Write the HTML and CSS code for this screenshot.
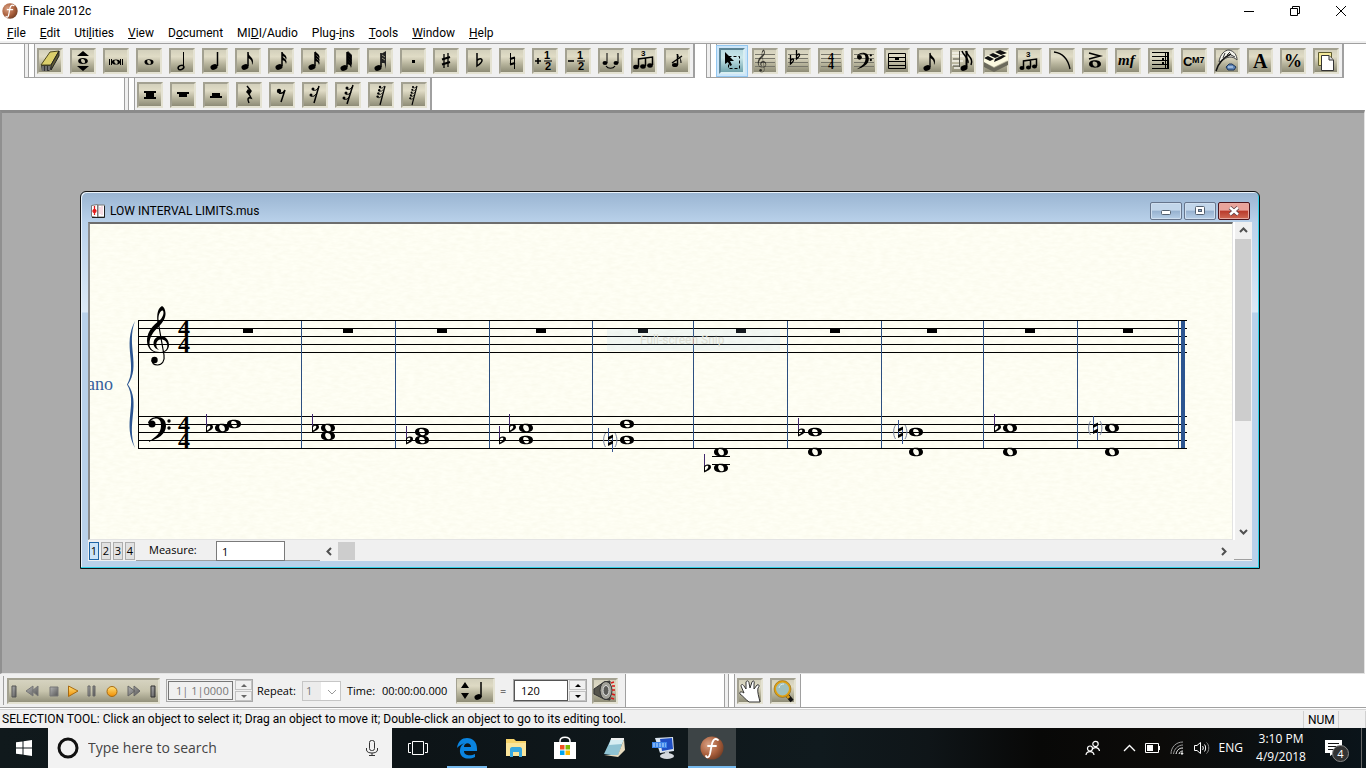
FILE: index.html
```html
<!DOCTYPE html>
<html lang="en">
<head>
    <meta charset="UTF-8">
    <meta name="viewport" content="width=device-width, initial-scale=1.0">
    <title>Finale 2012c</title>
    <link rel="stylesheet" href="styles.css">
</head>
<body>
    <!-- Shared music symbols -->
    <svg class="defs" aria-hidden="true">
        <defs>
            <radialGradient id="copper" cx="35%" cy="35%" r="75%">
                <stop offset="0" stop-color="#d9a184"/>
                <stop offset=".6" stop-color="#a95f3c"/>
                <stop offset="1" stop-color="#6d3a22"/>
            </radialGradient>
            <linearGradient id="gold" x1="0" y1="0" x2="0" y2="1">
                <stop offset="0" stop-color="#ffe27a"/>
                <stop offset="1" stop-color="#f08c00"/>
            </linearGradient>
            <linearGradient id="steel" x1="0" y1="0" x2="1" y2="1">
                <stop offset="0" stop-color="#b5b5b5"/>
                <stop offset="1" stop-color="#555"/>
            </linearGradient>
            <filter id="paper" x="0" y="0" width="100%" height="100%">
                <feTurbulence type="fractalNoise" baseFrequency="0.12 0.35" numOctaves="3" seed="3"/>
                <feColorMatrix values="0 0 0 0 .72  0 0 0 0 .7  0 0 0 0 .5  .22 0 0 0 -.06"/>
            </filter>
            <g id="whole"><path fill-rule="evenodd" d="M-7 0C-7-3-4-4.300 0-4.300S7-3 7 0 4 4.300 0 4.300-7 3-7 0ZM-2.800-1.500C-3.200 1 -1 3.400 1 3.300 3 3.200 3.200 1 2.600-.8 1.800-3-2.400-4-2.800-1.500Z"/></g>
            <g id="flat">
                <path d="M0-14H1V4H0Z" fill="#43296e"/>
                <path fill-rule="evenodd" d="M0-1.500C2-4 7-4.200 7-1 7 1.800 3 3 0 4.500ZM1 2.500C3 1.500 4.300 0 4.300-1.300 4.300-3 2-2.500 1-1Z"/>
            </g>
            <g id="natural">
                <path d="M5.500-12V5M9.500-5V12" stroke="#3a568f" fill="none"/>
                <path d="M5-3 10-5.500V-2.500L5 0ZM5 3 10 .5V3.500L5 6Z"/>
                <path d="M2.500-7C0-3 0 3 2.500 7M12-7C14.500-3 14.500 3 12 7" stroke="#77829c" fill="none"/>
            </g>
            <g id="head"><ellipse rx="3.600" ry="2.700" transform="rotate(-20)"/></g>
            <g id="flag"><path d="M0 0C0 4 5 5 5 9 5 11 4.500 12 4 13 4.300 9 3 7 0 6Z"/></g>
            <g id="shortflag"><path d="M0 0C1 2 4 2.500 4.600 6L4 8C3.500 5 2 4.500 0 4Z"/></g>
            <g id="hook"><circle r="1.500"/><path d="M0 1C2 2 4 1 5-1" stroke="#000" fill="none"/></g>
            <g id="staff"><path d="M3 6.500H23M3 10.500H23M3 14.500H23M3 18.500H23" stroke="#77766a" fill="none"/></g>
            <symbol id="clef-g" viewBox="146 305 24 62">
                <path fill-rule="evenodd" d="M162 306C158 308 156.500 314 157.500 322 150 328 147 334 147 341 147 348 152 353 159 353 165 353 169 350 169 345 169 340 165.500 336 161 336 156 336 153.500 340 153.500 343.500 153.500 347 156 349 159 350 156.500 348 156.300 346 156.300 344.500 156.300 341.500 158 339.500 161 339.500 165 339.500 167.300 342 167.300 346 167.300 350 164 352 159.500 352 153 352 149.500 348.500 149.500 344 149.500 337 153 332 159 326.500 163 322 165.800 318 165.500 313 165.200 309.500 164 307 162 306ZM162.500 310.500C164 311 164 315 161 319 159.700 320.500 159 320.500 158.600 320.500 158 315 160 311 162.500 310.500Z"/>
                <path d="M158 321 164 355C165 361 162 365 157.500 365 154 365 152 363 152 360" fill="none" stroke="#000" stroke-width="1.200"/>
                <circle cx="154.500" cy="360" r="3.200"/>
            </symbol>
            <symbol id="clef-f" viewBox="147 416 25 27">
                <path d="M148 423C149 419 153 417 157 417 162.500 417 166 420 166 426 166 434 158 439 148 442 156 437 161 433 161 425.500 161 420.500 159 418.500 156 418.500 153 418.500 150.500 420 149.500 423Z"/>
                <circle cx="152" cy="424" r="3.500"/><circle cx="169" cy="421" r="1.700"/><circle cx="169" cy="428" r="1.700"/>
            </symbol>
            <symbol id="finale" viewBox="0 0 24 24">
                <circle cx="12" cy="12" r="11.500" fill="url(#copper)"/>
                <path d="M18 4C14 1 12 6 11.500 10L10 18C9 22 7 22 6 20M8 10H16" fill="none" stroke="#fff" stroke-width="1.800" stroke-linecap="round"/>
            </symbol>
        </defs>
    </svg>

    <header class="titlebar">
        <svg class="app-icon" viewBox="0 0 24 24"><use href="#finale"/></svg>
        <span class="app-title">Finale 2012c</span>
        <div class="window-buttons">
            <button aria-label="Minimize"><svg width="12" height="12"><path d="M1 6.500H11" stroke="#000"/></svg></button>
            <button aria-label="Restore"><svg width="12" height="12" fill="none" stroke="#000"><path d="M1.500 3.500H8.500V10.500H1.500ZM3.500 3V1.500H10.500V8.500H9"/></svg></button>
            <button aria-label="Close"><svg width="12" height="12"><path d="M1 1 11 11M11 1 1 11" stroke="#000"/></svg></button>
        </div>
    </header>

    <nav class="menubar">
        <a href="#"><u>F</u>ile</a>
        <a href="#"><u>E</u>dit</a>
        <a href="#">Uti<u>l</u>ities</a>
        <a href="#"><u>V</u>iew</a>
        <a href="#">D<u>o</u>cument</a>
        <a href="#">MI<u>D</u>I/Audio</a>
        <a href="#">Plug-<u>i</u>ns</a>
        <a href="#"><u>T</u>ools</a>
        <a href="#"><u>W</u>indow</a>
        <a href="#"><u>H</u>elp</a>
    </nav>

    <div class="dock">
        <div class="dock-row">
            <!-- Simple entry palette -->
            <div class="toolbar">
                <button class="tool" aria-label="Eraser"><svg viewBox="0 0 26 26"><path d="M4 17H13L14 21 12 23H5Z" fill="#333"/><path d="M6 18V23M9 18V23M12 18V22" stroke="#aaa"/><path d="M13 4 22 3 14 17H4Z" fill="#dccf6c" stroke="#4d481f"/><path d="M22 3V8L14 22V17Z" fill="#5f5b33" stroke="#222"/></svg></button>
                <button class="tool" aria-label="Repitch"><svg viewBox="0 0 26 26"><path d="M13 3 19 8H7ZM13 23 19 18H7Z"/><use href="#whole" transform="translate(13 13) scale(.7)"/></svg></button>
                <button class="tool" aria-label="Double whole note"><svg viewBox="0 0 26 26"><use href="#whole" transform="translate(13 14) scale(.6)"/><path d="M6.500 11V17M8.500 11V17M17.500 11V17M19.500 11V17" stroke="#000"/></svg></button>
                <button class="tool" aria-label="Whole note"><svg viewBox="0 0 26 26"><use href="#whole" transform="translate(13 14) scale(.65)"/></svg></button>
                <button class="tool" aria-label="Half note"><svg viewBox="0 0 26 26"><ellipse cx="12" cy="19.500" rx="3" ry="2" fill="none" stroke="#000" stroke-width="1.500" transform="rotate(-25 12 19.500)"/><path d="M14.500 4V19" stroke="#000"/></svg></button>
                <button class="tool" aria-label="Quarter note"><svg viewBox="0 0 26 26"><use href="#head" x="12" y="19"/><path d="M15.500 4V18" stroke="#000" stroke-width="1.500"/></svg></button>
                <button class="tool" aria-label="Eighth note"><svg viewBox="0 0 26 26"><use href="#head" x="10" y="19"/><path d="M13 4V18" stroke="#000" stroke-width="1.500"/><use href="#flag" x="13" y="4"/></svg></button>
                <button class="tool" aria-label="Sixteenth note"><svg viewBox="0 0 26 26"><use href="#head" x="11" y="19"/><path d="M14 4V18" stroke="#000" stroke-width="1.500"/><use href="#shortflag" x="14" y="4"/><use href="#shortflag" x="14" y="8"/></svg></button>
                <button class="tool" aria-label="32nd note"><svg viewBox="0 0 26 26"><use href="#head" x="11" y="19"/><path d="M14 4V18" stroke="#000" stroke-width="1.500"/><use href="#shortflag" x="14" y="3"/><use href="#shortflag" x="14" y="6"/><use href="#shortflag" x="14" y="9"/></svg></button>
                <button class="tool" aria-label="64th note"><svg viewBox="0 0 26 26"><use href="#head" x="10" y="20"/><path d="M13 4V19" stroke="#000" stroke-width="1.500"/><path d="M14 3 18 7V17L13 14Z" fill="#222"/><use href="#shortflag" x="13" y="3"/><use href="#shortflag" x="13" y="6"/><use href="#shortflag" x="13" y="9"/><use href="#shortflag" x="13" y="12"/></svg></button>
                <button class="tool" aria-label="128th note"><svg viewBox="0 0 26 26"><use href="#head" x="11" y="20"/><path d="M14 5V19" stroke="#000" stroke-width="1.500"/><path d="M14 6 19 3V21L17.500 15 14 15Z" fill="#222"/><path d="M15 7 18 9M15 10 18 12" stroke="#99967f"/></svg></button>
                <button class="tool" aria-label="Augmentation dot"><svg viewBox="0 0 26 26"><rect x="12" y="12" width="3" height="3"/></svg></button>
                <button class="tool" aria-label="Sharp"><svg viewBox="0 0 26 26"><path d="M11 6V20M15 5V19" stroke="#000" stroke-width="1.300"/><path d="M9 11.500 17 9M9 16.500 17 14" stroke="#000" stroke-width="2.200"/></svg></button>
                <button class="tool" aria-label="Flat"><svg viewBox="0 0 26 26"><path d="M11 5V18C14 16 16 14 16 12.500 16 10 13 10 11 12.500" fill="none" stroke="#000" stroke-width="1.500"/></svg></button>
                <button class="tool" aria-label="Natural"><svg viewBox="0 0 26 26"><path d="M11.500 5V17M15.500 9V21" stroke="#000"/><path d="M11 11 16 9.500M11 16.500 16 15" stroke="#000" stroke-width="2.200"/></svg></button>
                <button class="tool" aria-label="Half step up"><svg viewBox="0 0 26 26"><path d="M3 13H9M6 10V16" stroke="#000" stroke-width="1.600"/><text x="12" y="11" class="fraction">1</text><path d="M12 13H20" stroke="#000"/><text x="13" y="22" class="fraction">2</text></svg></button>
                <button class="tool" aria-label="Half step down"><svg viewBox="0 0 26 26"><path d="M3 13H9" stroke="#000" stroke-width="1.600"/><text x="12" y="11" class="fraction">1</text><path d="M12 13H20" stroke="#000"/><text x="13" y="22" class="fraction">2</text></svg></button>
                <button class="tool" aria-label="Tie"><svg viewBox="0 0 26 26"><ellipse cx="7" cy="15" rx="2.500" ry="2"/><ellipse cx="18" cy="15" rx="2.500" ry="2"/><path d="M9 5V15M20 5V15" stroke="#000"/><path d="M8 18C10 21 15 21 17 18" fill="none" stroke="#000" stroke-width="1.200"/></svg></button>
                <button class="tool" aria-label="Tuplet"><svg viewBox="0 0 26 26"><text x="10" y="8" class="tiny">3</text><path d="M7.500 19V11L21.500 9V17M14.500 18V10" fill="none" stroke="#000" stroke-width="1.500"/><ellipse cx="5" cy="19" rx="2.800" ry="2.200"/><ellipse cx="12" cy="18.500" rx="2.800" ry="2.200"/><ellipse cx="19" cy="17.500" rx="2.800" ry="2.200"/></svg></button>
                <button class="tool" aria-label="Grace note"><svg viewBox="0 0 26 26"><ellipse cx="11" cy="17" rx="3" ry="2"/><path d="M13.500 6V17M8 15 18 8" stroke="#000" stroke-width="1.500"/><path d="M13 6C14 9 17 9 17 15" fill="none" stroke="#000"/></svg></button>
            </div>

            <!-- Main tool palette -->
            <div class="toolbar">
                <button class="tool selected" aria-label="Selection tool"><svg viewBox="0 0 26 26"><rect x="9.500" y="8.500" width="11" height="12" fill="none" stroke="#000" stroke-dasharray="3 2"/><path d="M6 4V16L9 14 11 18 13 17 11 13H15Z"/></svg></button>
                <button class="tool" aria-label="Staff tool"><svg viewBox="0 0 26 26"><use href="#staff"/><use href="#clef-g" x="4" y="1" width="12" height="24" opacity=".7"/></svg></button>
                <button class="tool" aria-label="Key signature tool"><svg viewBox="0 0 26 26"><use href="#staff"/><path d="M5.500 7V16C8 14 9 13 8.500 11.500 8 10.500 7 11 5.500 12.500M11.500 2V11C14 9 15 8 14.500 6.500 14 5.500 13 6 11.500 7.500" fill="none" stroke="#000" stroke-width="1.300"/></svg></button>
                <button class="tool" aria-label="Time signature tool"><svg viewBox="0 0 26 26"><use href="#staff"/><text x="10" y="13" class="meter">4</text><text x="10" y="21" class="meter">4</text></svg></button>
                <button class="tool" aria-label="Clef tool"><svg viewBox="0 0 26 26"><use href="#staff"/><use href="#clef-f" x="5" y="4" width="17" height="18"/></svg></button>
                <button class="tool" aria-label="Measure tool"><svg viewBox="0 0 26 26"><path d="M4.500 5.500H21.500V20.500H4.500ZM4 9.500H22M4 13.500H22M4 17.500H22" fill="none" stroke="#000"/><path d="M11 10H15V12H11Z"/></svg></button>
                <button class="tool" aria-label="Simple entry tool"><svg viewBox="0 0 26 26"><use href="#head" x="10" y="20"/><path d="M13 5V19" stroke="#000" stroke-width="1.300"/><use href="#flag" x="13" y="4"/></svg></button>
                <button class="tool" aria-label="Speedy entry tool"><svg viewBox="0 0 26 26"><path d="M2 5H14M2 8H14M2 13H13M2 17H10M4 20H12" stroke="#f5f4ea" stroke-width="1.500"/><path d="M9.500 3V19M3 18H10M3 11H10" stroke="#55544a"/><use href="#head" x="14" y="20"/><path d="M16.500 3V19" stroke="#000" stroke-width="2"/><path d="M12 3C13 7 19 10 18 15M16 3C17 8 24 10 21 17" fill="none" stroke="#000" stroke-width="1.500"/></svg></button>
                <button class="tool" aria-label="HyperScribe tool"><svg viewBox="0 0 26 26"><path d="M1 14 11 20V24L1 19ZM11 20 25 13V17L11 24Z" fill="#6b6a5c"/><path d="M1 9 15 3 25 3V12L11 19 1 14Z" fill="#fbf9e0"/><path d="M1 10 7 13 11 11 5 8ZM6 7 12 10 17 8 10 5ZM12 4 18 7 24 5 17 2ZM11 14 18 11 23 8 20 7 12 11Z" fill="#111"/></svg></button>
                <button class="tool" aria-label="Tuplet tool"><svg viewBox="0 0 26 26"><text x="10" y="9" class="tiny">3</text><path d="M7.500 19V13L20.500 11V18M14.500 19V12" fill="none" stroke="#000" stroke-width="1.500"/><ellipse cx="6" cy="20" rx="2.500" ry="2"/><ellipse cx="12.500" cy="19.500" rx="2.500" ry="2"/><ellipse cx="18.500" cy="18.500" rx="2.500" ry="2"/></svg></button>
                <button class="tool" aria-label="Smart shape tool"><svg viewBox="0 0 26 26"><path d="M5 4C13 5 19 11 21 21" fill="none" stroke="#000" stroke-width="1.300"/></svg></button>
                <button class="tool" aria-label="Articulation tool"><svg viewBox="0 0 26 26"><path d="M7 5 18 8 7 11" fill="none" stroke="#000" stroke-width="1.600"/><use href="#whole" transform="translate(13 16) scale(.85)"/></svg></button>
                <button class="tool" aria-label="Expression tool"><svg viewBox="0 0 26 26"><text x="3" y="17" class="dynamic">mf</text></svg></button>
                <button class="tool" aria-label="Repeat tool"><svg viewBox="0 0 26 26"><path d="M4 4.500H21M4 8.500H21M4 12.500H21M4 16.500H21M4 20.500H21M17.500 4V21" stroke="#000"/><path d="M19 4H21V21H19ZM14 10H16V12H14ZM14 14H16V16H14Z"/></svg></button>
                <button class="tool" aria-label="Chord tool"><svg viewBox="0 0 26 26"><text x="2" y="18" class="chord">C</text><text x="11" y="15" class="chord-small">M7</text></svg></button>
                <button class="tool" aria-label="Lyrics tool"><svg viewBox="0 0 26 26"><path d="M5 14C6 6 11 2 15 2 20 3 23 7 23 12 18 7 12 9 8 13Z" fill="#f4f4ec" stroke="#444"/><path d="M2 23C4 16 8 10 17 6" fill="none" stroke="#111" stroke-width="1.500"/><path d="M9 10 11 5M13 7 16 4M17 7 21 9" fill="none" stroke="#333"/><path d="M15 16H18L22 19 20 22H14L12 19Z" fill="#5e86b8" stroke="#1e3557"/><path d="M14 19H19" stroke="#dce9f8"/></svg></button>
                <button class="tool" aria-label="Text tool"><svg viewBox="0 0 26 26"><text x="6" y="20" class="letter">A</text></svg></button>
                <button class="tool" aria-label="Resize tool"><svg viewBox="0 0 26 26"><text x="4" y="19" class="percent">%</text></svg></button>
                <button class="tool" aria-label="Page layout tool"><svg viewBox="0 0 26 26"><path d="M5.500 4.500H18.500V17.500H5.500Z" fill="#f3e899" stroke="#5d5a2d"/><path d="M8.500 7.500H16L20.500 12V22.500H8.500Z" fill="#fff" stroke="#333"/><path d="M16 7.500V12H20" fill="#ddd" stroke="#333"/></svg></button>
            </div>
        </div>

        <div class="dock-row rests">
            <div class="toolbar">
                <button class="tool" aria-label="Double whole rest"><svg viewBox="0 0 26 26"><path d="M7 9H19V11H17V15H19V17H7V15H9V11H7Z"/></svg></button>
                <button class="tool" aria-label="Whole rest"><svg viewBox="0 0 26 26"><path d="M7 10H19V12H17V15H9V12H7Z"/></svg></button>
                <button class="tool" aria-label="Half rest"><svg viewBox="0 0 26 26"><path d="M9 11H17V14H19V16H7V14H9Z"/></svg></button>
                <button class="tool" aria-label="Quarter rest"><svg viewBox="0 0 26 26"><path d="M11 4 15 9 13 12 15 16C12 15 11 17 13 21" fill="none" stroke="#000" stroke-width="1.500"/><path d="M12 7 15 9 13 13 10 10Z"/></svg></button>
                <button class="tool" aria-label="Eighth rest"><svg viewBox="0 0 26 26"><circle cx="10" cy="9" r="2.200"/><path d="M10 11C13 12 15 10 16 8L12 20" fill="none" stroke="#000" stroke-width="1.500"/></svg></button>
                <button class="tool" aria-label="Sixteenth rest"><svg viewBox="0 0 26 26"><use href="#hook" x="11" y="7"/><use href="#hook" x="9" y="13"/><path d="M17 4 12 21" stroke="#000" stroke-width="1.500"/></svg></button>
                <button class="tool" aria-label="32nd rest"><svg viewBox="0 0 26 26"><use href="#hook" x="12" y="6"/><use href="#hook" x="11" y="11"/><use href="#hook" x="9" y="16"/><path d="M18 3 12 22" stroke="#000" stroke-width="1.500"/></svg></button>
                <button class="tool" aria-label="64th rest"><svg viewBox="0 0 26 26"><g transform="translate(12 5) scale(.8)"><use href="#hook"/><use href="#hook" x="-1" y="4"/><use href="#hook" x="-2" y="8"/><use href="#hook" x="-3" y="12"/></g><path d="M17 4 12 23" stroke="#000" stroke-width="1.300"/></svg></button>
                <button class="tool" aria-label="128th rest"><svg viewBox="0 0 26 26"><g transform="translate(12 5) scale(.7)"><use href="#hook"/><use href="#hook" x="-1" y="4"/><use href="#hook" x="-2" y="8"/><use href="#hook" x="-3" y="12"/><use href="#hook" x="-4" y="16"/></g><path d="M16 4 11 23" stroke="#000" stroke-width="1.100"/></svg></button>
            </div>
        </div>
    </div>

    <main class="workspace">
        <section class="document">
            <div class="document-title">
                <svg width="16" height="16" viewBox="0 0 16 16"><path d="M1.500 2.500 7.500 1.500V14.500L1.500 13.500ZM8 2H14.500V14H8Z" fill="#fff" stroke="#777"/><path d="M14.500 3V14.500H2" fill="none" stroke="#222"/><path d="M4.500 3V12M3 8C3 6 6 6 6 8S3 10 3 8" fill="none" stroke="#e01818" stroke-width="1.300"/><path d="M10 4V11M12 3V12" stroke="#eeb8c8"/></svg>
                <span>LOW INTERVAL LIMITS.mus</span>
                <button class="caption" aria-label="Minimize document"><svg width="12" height="12"><rect x="1.500" y="5.500" width="9" height="4" rx="1" fill="#fff" stroke="#53606f"/></svg></button>
                <button class="caption" aria-label="Maximize document"><svg width="12" height="12"><rect x="1.500" y="1.500" width="9" height="8" rx="1" fill="#fff" stroke="#53606f"/><rect x="4.500" y="4.500" width="3" height="2" fill="#8faacb" stroke="#53606f"/></svg></button>
                <button class="caption close" aria-label="Close document"><svg width="12" height="12"><path d="M2 2.500 10 9.500M10 2.500 2 9.500" stroke="#5b3f45" stroke-width="4"/><path d="M2 2.500 10 9.500M10 2.500 2 9.500" stroke="#fff" stroke-width="2.400"/></svg></button>
            </div>

            <div class="document-body">
                <div class="score">
                    <svg class="texture"><rect width="100%" height="100%" filter="url(#paper)"/></svg>
                    <svg class="staves" width="1142" height="315" viewBox="90 224 1142 315">
                        <text x="113" y="390" class="staff-name" text-anchor="end">Piano</text>
                        <path class="brace" d="M135 321C122 345 138 366 127 384.500 138 403 122 424 135 448 126 424 141 403 128 384.500 141 366 126 345 135 321Z"/>

                        <path class="staff-line" d="M138 320.500H1187M138 328.500H1187M138 336.500H1187M138 344.500H1187M138 352.500H1187M138 416.500H1187M138 424.500H1187M138 432.500H1187M138 440.500H1187M138 448.500H1187M138.500 320V449"/>
                        <path class="barline" d="M301.500 321V448M395.500 321V448M489.500 321V448M592.500 321V448M693.500 321V448M787.500 321V448M881.500 321V448M983.500 321V448M1077.500 321V448M1178.500 321V448"/>
                        <rect class="final-bar" x="1181" y="321" width="4" height="127"/>

                        <use href="#clef-g" x="146" y="305" width="24" height="62"/>
                        <use href="#clef-f" x="147" y="416" width="25" height="27"/>
                        <g class="time-signature">
                            <text x="178" y="336">4</text>
                            <text x="178" y="352">4</text>
                            <text x="178" y="432">4</text>
                            <text x="178" y="448">4</text>
                        </g>

                        <path d="M243 329h10v4h-10zM343 329h10v4h-10zM437 329h10v4h-10zM536 329h10v4h-10zM638 329h10v4h-10zM736 329h10v4h-10zM830 329h10v4h-10zM927 329h10v4h-10zM1025 329h10v4h-10zM1123 329h10v4h-10z"/>

                        <use href="#flat" x="206" y="428"/><use href="#whole" x="222" y="428"/><use href="#whole" x="234" y="424"/>
                        <use href="#flat" x="312" y="428"/><use href="#whole" x="328" y="428"/><use href="#whole" x="328" y="436"/>
                        <use href="#flat" x="406" y="440"/><use href="#whole" x="422" y="432"/><use href="#whole" x="422" y="440"/>
                        <use href="#flat" x="509" y="428"/><use href="#flat" x="499" y="440"/><use href="#whole" x="526" y="428"/><use href="#whole" x="526" y="440"/>
                        <use href="#natural" x="603" y="440"/><use href="#whole" x="627" y="424"/><use href="#whole" x="627" y="440"/>
                        <use href="#flat" x="704" y="468"/><use href="#whole" x="721" y="452"/><use href="#whole" x="721" y="468"/>
                        <path class="staff-line" d="M712 456.500H730M712 464.500H730"/>
                        <use href="#flat" x="798" y="432"/><use href="#whole" x="815" y="432"/><use href="#whole" x="815" y="452"/>
                        <use href="#natural" x="893" y="432"/><use href="#whole" x="916" y="432"/><use href="#whole" x="916" y="452"/>
                        <use href="#flat" x="994" y="428"/><use href="#whole" x="1010" y="428"/><use href="#whole" x="1010" y="452"/>
                        <use href="#natural" x="1088" y="428"/><use href="#whole" x="1112" y="428"/><use href="#whole" x="1112" y="452"/>

                        <rect x="607" y="329" width="173" height="22" fill="#9cc8f0" opacity=".13"/>
                        <text x="640" y="344" class="ghost">Full-screen Snip</text>
                    </svg>
                </div>
                <div class="scroll-vertical">
                    <button aria-label="Scroll up"><svg width="9" height="9"><path d="M1 6 4.500 2.500 8 6" class="arrow"/></svg></button>
                    <div class="thumb"></div>
                    <button aria-label="Scroll down"><svg width="9" height="9"><path d="M1 3 4.500 6.500 8 3" class="arrow"/></svg></button>
                </div>
            </div>

            <div class="document-footer">
                <button class="layer active">1</button>
                <button class="layer">2</button>
                <button class="layer">3</button>
                <button class="layer">4</button>
                <div class="measure">
                    <label for="measure">Measure:</label>
                    <input type="text" id="measure" value="1">
                </div>
                <div class="scroll-horizontal">
                    <button aria-label="Scroll left"><svg width="9" height="9"><path d="M6 1 2.500 4.500 6 8" class="arrow"/></svg></button>
                    <div class="thumb"></div>
                    <button aria-label="Scroll right"><svg width="9" height="9"><path d="M3 1 6.500 4.500 3 8" class="arrow"/></svg></button>
                </div>
                <div class="corner"></div>
            </div>
        </section>
    </main>

    <div class="playback-dock">
        <div class="playback">
            <div class="transport">
                <button aria-label="Go to start"><svg width="8" height="16"><path d="M2 3H6V14H2Z" fill="url(#steel)" stroke="#555"/></svg></button>
                <button aria-label="Rewind"><svg width="16" height="16"><path d="M8 3V13L1 8ZM13 3V13L7 8Z" fill="url(#steel)" stroke="#777"/></svg></button>
                <button aria-label="Stop"><svg width="12" height="16"><path d="M2 4H10V13H2Z" fill="url(#steel)" stroke="#777"/></svg></button>
                <button aria-label="Play"><svg width="12" height="16"><path d="M1.500 3V13.500L11 8Z" fill="url(#gold)" stroke="#a86a10"/></svg></button>
                <button aria-label="Pause"><svg width="12" height="16"><path d="M2 3H4V13H2ZM7 3H9V13H7Z" fill="url(#steel)" stroke="#666"/></svg></button>
                <button aria-label="Record"><svg width="14" height="16"><circle cx="7" cy="8.500" r="5" fill="url(#gold)" stroke="#a86a10"/></svg></button>
                <button aria-label="Fast forward"><svg width="16" height="16"><path d="M2 3V13L9 8ZM8 3V13L14 8Z" fill="url(#steel)" stroke="#666"/></svg></button>
                <button aria-label="Go to end"><svg width="8" height="16"><path d="M2 3H6V14H2Z" fill="url(#steel)" stroke="#333"/></svg></button>
            </div>
            <div class="counter">
                <input type="text" value="1| 1|0000" aria-label="Position" disabled>
                <div class="spin"><button aria-label="Position up"></button><button aria-label="Position down"></button></div>
            </div>
            <label for="repeat">Repeat:</label>
            <div class="repeat-select">
                <select id="repeat" disabled><option>1</option></select>
                <svg width="10" height="6"><path d="M1 1 5 5 9 1" fill="none" stroke="#999"/></svg>
            </div>
            <span class="time-label">Time:</span>
            <output class="time">00:00:00.000</output>
            <button class="beat" aria-label="Beat unit"><svg width="36" height="23"><path d="M8 3 12 9H4ZM8 20 12 14H4Z"/><use href="#head" x="21" y="18"/><path d="M24 3V18" stroke="#000" stroke-width="1.500"/></svg></button>
            <label for="tempo" class="equals">=</label>
            <div class="tempo">
                <input type="text" id="tempo" value="120">
                <div class="spin dark"><button aria-label="Tempo up"></button><button aria-label="Tempo down"></button></div>
            </div>
            <button class="tool speaker" aria-label="Playback settings"><svg viewBox="0 0 26 26"><path d="M2 11 12 4 18 3V22L12 21 2 16Z" fill="#55544c" stroke="#333"/><ellipse cx="14" cy="12.500" rx="6" ry="9" fill="#a3a299" stroke="#333"/><ellipse cx="14" cy="12.500" rx="3" ry="5" fill="#5a5a56" stroke="#ddd"/><path d="M19 5 22 4M20 8 23 8M20 12H23M20 16 23 17M19 20 22 21" stroke="#d81818" stroke-width="1.500"/></svg></button>
        </div>
        <div class="toolbar navigation">
            <button class="tool" aria-label="Hand grabber"><svg viewBox="0 0 26 26"><path d="M12 24C8 21 6 18 3 16 2 14 4 13 7 15L4 8C4 6 6 6 7 8L9 11 9 4C10 2 12 3 12 5L13 10 15 4C16 2 18 3 17 6L17 11 20 7C22 6 23 8 21 10 20 14 22 19 23 24Z" fill="#fff" stroke="#333"/></svg></button>
            <button class="tool" aria-label="Zoom tool"><svg viewBox="0 0 26 26"><path d="M17 17 22 23" stroke="#111" stroke-width="4"/><path d="M16 16 19 20" stroke="#d89a13" stroke-width="3"/><circle cx="12.500" cy="11" r="7.500" fill="#9fc0bd" stroke="#e0a010" stroke-width="2"/><circle cx="12.500" cy="11" r="8.500" fill="none" stroke="#775a14" stroke-width=".5"/><path d="M9 10C9 7 12 6 14 6" fill="none" stroke="#dceceb"/></svg></button>
        </div>
    </div>

    <footer class="statusbar">
        <span class="message">SELECTION TOOL: Click an object to select it; Drag an object to move it; Double-click an object to go to its editing tool.</span>
        <span class="num">NUM</span>
        <span class="spacer"></span>
    </footer>

    <div class="taskbar">
        <button class="start" aria-label="Start"><svg width="16" height="16"><path d="M0 2.300 6.500 1.400V7.500H0ZM7.500 1.200 16 0V7.500H7.500ZM0 8.500H6.500V14.600L0 13.700ZM7.500 8.500H16V16L7.500 14.800Z" fill="#fff"/></svg></button>
        <div class="search">
            <svg width="22" height="22"><circle cx="11" cy="11" r="9" fill="none" stroke="#111" stroke-width="3"/></svg>
            <input type="text" placeholder="Type here to search" aria-label="Type here to search">
            <svg width="14" height="18" fill="none" stroke="#333"><rect x="4.500" y="1.500" width="5" height="10" rx="2"/><path d="M1.500 9V11C1.500 15 12.500 15 12.500 11V9M7 14V17M4 16.500H10"/></svg>
        </div>
        <div class="apps">
            <button aria-label="Task view"><svg width="22" height="16" fill="none" stroke="#fff"><path d="M5.500 1.500H16.500V14.500H5.500ZM4 3.500H1.500V12.500H4M18 3.500H20.500V12.500H18"/></svg></button>
            <button class="running" aria-label="Edge"><svg width="22" height="22"><path d="M1 11C2 4 6 1 11 1 17 1 21 5 21 12V14H8C8 19 15 19 19 17V20C11 24 3 20 4 13 4 10 6 7 9 6 5 7 3 9 1 11ZM8 10H15C15 5 8 5 8 10Z" fill="#0a84e0" fill-rule="evenodd"/></svg></button>
            <button aria-label="File Explorer"><svg width="22" height="20"><path d="M1 1H9L11 3H21V18H1Z" fill="#f7d36b"/><path d="M1 5H21V18H1Z" fill="#fbe59b"/><path d="M5 19V11C5 10 6 9 7 9H15C16 9 17 10 17 11V19H14V14H8V19Z" fill="#38a8e0"/></svg></button>
            <button aria-label="Store"><svg width="24" height="24"><path d="M7 7V5C7 0 17 0 17 5V7" fill="none" stroke="#fff" stroke-width="1.500"/><path d="M1 6H23V23H1Z" fill="#fff"/><path d="M7 9H11.500V13.500H7Z" fill="#f25022"/><path d="M12.500 9H17V13.500H12.500Z" fill="#7fba00"/><path d="M7 14.500H11.500V19H7Z" fill="#00a4ef"/><path d="M12.500 14.500H17V19H12.500Z" fill="#ffb900"/></svg></button>
            <button aria-label="Notepad"><svg width="24" height="24"><path d="M9 3H22L16 20 2 18Z" fill="#8fc3d3"/><path d="M9 3H22L20 8 7 9Z" fill="#d6edf2"/><path d="M22 3 23 14 16 21 2 19 16 19Z" fill="#e7dcc0"/><path d="M9 3H22" stroke="#eee" stroke-width="2"/></svg></button>
            <button aria-label="Remote Desktop"><svg width="24" height="24"><path d="M4 2 22 1 23 15 9 17Z" fill="#dbe5f0"/><path d="M9 3 21 2 22 13 11 15Z" fill="#1f4fc4"/><path d="M1 6H16V12H1Z" fill="#3a83e8"/><path d="M2 8H15M2 10H15" stroke="#bfe0ff" stroke-dasharray="2 1"/><path d="M14 15H18V19H14Z" fill="#c4cad2"/><ellipse cx="16" cy="20" rx="7" ry="3" fill="#d5d9de"/></svg></button>
            <button class="running current" aria-label="Finale"><svg width="24" height="24"><use href="#finale"/></svg></button>
        </div>
        <div class="tray">
            <button class="people" aria-label="People"><svg width="16" height="16" fill="none" stroke="#fff" stroke-width="1.200"><circle cx="10.500" cy="4" r="2.700"/><path d="M7 9.500C9 6.500 14 7 14.500 11"/><circle cx="5" cy="8.500" r="2.500"/><path d="M1 15C1.500 10.500 8.500 10.500 9 15"/></svg></button>
            <button class="chevron" aria-label="Show hidden icons"><svg width="13" height="8"><path d="M1 7 6.500 1.500 12 7" fill="none" stroke="#fff" stroke-width="1.300"/></svg></button>
            <button aria-label="Battery"><svg width="16" height="10"><path d="M.5.500H13.500V9.500H.5Z" fill="none" stroke="#fff"/><path d="M2 2H8V8H2ZM14 3H15V7H14Z" fill="#fff"/></svg></button>
            <button aria-label="Network"><svg width="14" height="14" fill="none" stroke="#fff"><path d="M1 13C1 6 6 1 13 1M3.500 13C4 8 8 4 13 4" stroke="#999"/><path d="M6 13C7 9 9 7 13 7M9 13C9.500 11 11 10 13 10"/><circle cx="12" cy="12.500" r=".8" fill="#fff"/></svg></button>
            <button aria-label="Volume"><svg width="17" height="14" fill="none" stroke="#fff"><path d="M1.500 4.500H4L7.500 1.500V12.500L4 9.500H1.500Z"/><path d="M9.500 5C10.500 6 10.500 8 9.500 9M11.500 3.500C13 5 13 9 11.500 10.500"/><path d="M13.500 1.500C16.500 4 16.500 10 13.500 12.500" stroke="#888"/></svg></button>
            <button class="language">ENG</button>
            <button class="clock"><span>3:10 PM</span><span>4/9/2018</span></button>
            <button class="notifications" aria-label="Notifications"><svg width="17" height="16"><path d="M0 0H17V13H9L5 16V13H0Z" fill="#fff"/><path d="M3 3.500H14M3 6.500H14M3 9.500H9" stroke="#111"/></svg><span class="badge">4</span></button>
            <button class="show-desktop" aria-label="Show desktop"></button>
        </div>
    </div>
</body>
</html>
```

FILE: styles.css
```css
* {
    box-sizing: border-box;
}
body {
    margin: 0;
    height: 100vh;
    display: flex;
    flex-direction: column;
    overflow: hidden;
    background-color: #fff;
    color: #000;
    font-family: Roboto, "Open Sans", sans-serif;
    font-size: 12px;
    line-height: 16px;
}
button, input, select {
    font: inherit;
    color: inherit;
    margin: 0;
    padding: 0;
    border: none;
    background: none;
}
svg {
    display: block;
}
.defs {
    position: absolute;
    width: 0;
    height: 0;
}

/* Application title and menu */
.titlebar {
    display: flex;
    align-items: center;
    height: 22px;
    padding-left: 2px;
}
.app-icon {
    width: 16px;
    height: 16px;
    margin-right: 5px;
}
.window-buttons {
    margin-left: auto;
    display: flex;
}
.window-buttons button {
    width: 46px;
    height: 20px;
    display: flex;
    justify-content: center;
    align-items: center;
}
.window-buttons button:last-child {
    margin-right: 2px;
}
.menubar {
    display: flex;
    height: 22px;
    gap: 14px;
    padding: 3px 7px 0;
    border-bottom: 1px solid #a0a0a0;
    box-shadow: inset 0 -2px #f0f0f0;
}
.menubar a {
    color: #000;
    text-decoration: none;
}

/* Docked tool palettes */
.dock-row {
    display: flex;
    gap: 11px;
    height: 34px;
    padding-left: 24px;
}
.dock-row.rests {
    height: 32px;
    padding-left: 124px;
}
.toolbar {
    display: flex;
    gap: 7px;
    padding: 4px 3px 0 2px;
    background-color: #f0f0f0;
    border: solid #a0a0a0;
    border-width: 0 2px 1px 1px;
}
.rests .toolbar {
    border-bottom: none;
}
.toolbar::before {
    content: "";
    width: 5px;
    margin: -4px -5px 0 1px;
    border: solid #a0a0a0;
    border-width: 0 1px;
    background-color: #fff;
}
.tool {
    width: 26px;
    height: 26px;
    border: solid;
    border-width: 2px;
    border-color: #a3a191 #e4e2d2 #e4e2d2 #a3a191;
    background: linear-gradient(#d3d0bc, #e0dcc6 30%, #b5b29a 65%, #8e8c77);
}
.tool svg {
    width: 26px;
    height: 26px;
    margin: -2px;
}
.tool.selected {
    border-color: #5c8494 #d9eef2 #d9eef2 #5c8494;
    background: linear-gradient(#b9dbe2, #c9e6ea 35%, #6fa3ac);
    box-shadow: 0 0 0 2px #cce6fa, 0 0 0 3px #93c7f0;
}
.fraction {
    font: bold 11px "Liberation Sans", sans-serif;
}
.tiny {
    font: bold 8px "Liberation Sans", sans-serif;
}
.meter {
    font: bold 12px "Liberation Serif", serif;
}
.dynamic {
    font: italic bold 15px "Liberation Serif", serif;
}
.chord {
    font: bold 13px "Liberation Sans", sans-serif;
}
.chord-small {
    font: bold 9px "Liberation Sans", sans-serif;
}
.letter {
    font: bold 20px "Liberation Serif", serif;
}
.percent {
    font: bold 18px "Liberation Serif", serif;
}

/* Document window */
.workspace {
    flex: 1;
    position: relative;
    margin-right: 1px;
    border: solid;
    border-width: 3px 1px 1px 2px;
    border-color: #8a8a8a #e3e3e3 #e3e3e3 #909090;
    background-color: #ababab;
}
.document {
    position: absolute;
    left: 78px;
    right: 104px;
    top: 78px;
    display: flex;
    flex-direction: column;
    padding: 0 7px 7px;
    border: 1px solid #111;
    border-radius: 6px 6px 0 0;
    box-shadow: inset -1px -1px #2fd0e6, inset 1px 1px #eaf3fb;
    background: linear-gradient(#99b4d1, #b9d1ea 30px, #dce9f6 120px, #b9d1ea 121px);
}
.document-title {
    display: flex;
    align-items: center;
    height: 30px;
    padding: 7px 2px 0;
}
.document-title span {
    margin: 0 auto 0 4px;
}
.document-title .caption {
    width: 32px;
    height: 18px;
    margin-left: 2px;
    display: flex;
    justify-content: center;
    align-items: center;
    border: 1px solid #66758c;
    border-radius: 2px;
    background: linear-gradient(#c2d6ea 45%, #96b1cf 50%, #b7cfe7);
    box-shadow: inset 0 0 0 1px #cfdfef;
}
.document-title .caption.close {
    border-color: #4c141c;
    background: linear-gradient(#e8a39b 45%, #b93a2b 50%, #cf6a55);
    box-shadow: inset 0 0 0 1px #e6aaa2;
}
.document-body {
    display: flex;
    height: 318px;
    background-color: #fff;
}
.score {
    position: relative;
    flex: 1;
    overflow: hidden;
    border: solid;
    border-width: 2px 1px 1px 2px;
    border-color: #6d6d6d #e3e3e3 #e3e3e3 #8d8d8d;
    background-color: #fffff5;
}
.texture {
    position: absolute;
    width: 100%;
    height: 100%;
}
.staves {
    position: relative;
}
.staff-line {
    stroke: #000;
    fill: none;
}
.barline {
    stroke: #2c4f80;
    fill: none;
}
.final-bar, .brace {
    fill: #2c5590;
}
.staff-name {
    font: 18px "Liberation Serif", serif;
    fill: #35609c;
}
.time-signature {
    font: bold 24px "Liberation Serif", serif;
}
.ghost {
    font-size: 12px;
    fill: #dedfd4;
}
.scroll-vertical {
    width: 17px;
    margin-left: 2px;
    display: flex;
    flex-direction: column;
    background-color: #f0f0f0;
}
.scroll-vertical button, .scroll-horizontal button {
    width: 17px;
    height: 17px;
    display: flex;
    justify-content: center;
    align-items: center;
}
.scroll-vertical button:last-child {
    margin-top: auto;
}
.scroll-vertical .thumb {
    width: 16px;
    height: 182px;
    background-color: #cdcdcd;
}
.arrow {
    fill: none;
    stroke: #505050;
    stroke-width: 2;
}
.document-footer {
    display: flex;
    gap: 2px;
    height: 21px;
    padding: 1px 0 0 1px;
    background-color: #f0f0f0;
    font-family: "Open Sans", "Noto Sans", sans-serif;
    font-size: 11px;
}
.layer {
    width: 10px;
    height: 18px;
    margin-top: 1px;
    border: 1px solid #adadad;
    background-color: #e1e1e1;
}
.layer.active {
    border-color: #1d64a5;
    background-color: #cce4f7;
}
.measure {
    display: flex;
    width: 184px;
    margin-left: -1px;
    padding-left: 13px;
    border-bottom: 1px solid #a0a0a0;
    line-height: 18px;
}
.measure label {
    width: 67px;
}
.measure input {
    width: 69px;
    height: 20px;
    padding-left: 5px;
    border: 1px solid #7a7a7a;
    background-color: #fff;
}
.scroll-horizontal {
    flex: 1;
    display: flex;
    align-items: center;
    margin-left: -1px;
}
.scroll-horizontal .thumb {
    width: 17px;
    height: 18px;
    background-color: #cdcdcd;
}
.scroll-horizontal button:last-child {
    margin-left: auto;
}
.corner {
    width: 18px;
    height: 19px;
    border-bottom: 1px solid #a0a0a0;
}

/* Playback controls */
.playback-dock {
    display: flex;
    gap: 98px;
    height: 34px;
    border-bottom: 1px solid #a0a0a0;
    background-color: #fff;
    font-family: "Open Sans", "Noto Sans", sans-serif;
    font-size: 11px;
}
.playback {
    display: flex;
    align-items: center;
    width: 626px;
    padding-left: 3px;
    border-right: 1px solid #a0a0a0;
    background-color: #f0f0f0;
}
.playback::before {
    content: "";
    width: 1px;
    height: 29px;
    margin-right: 3px;
    background-color: #a0a0a0;
}
.transport {
    display: flex;
    justify-content: space-between;
    align-items: center;
    width: 153px;
    height: 26px;
    padding: 0 1px;
    border: solid;
    border-width: 2px;
    border-color: #a3a191 #e4e2d2 #e4e2d2 #a3a191;
    background: linear-gradient(#d6d3c0, #c8c5ae 50%, #93917b);
}
.counter, .tempo {
    display: flex;
    align-items: center;
    height: 23px;
    border: 1px solid #a8a8a8;
    background-color: #f0f0f0;
}
.counter {
    margin: 0 4px 0 6px;
}
.counter input {
    width: 65px;
    height: 19px;
    margin: 0 2px 0 1px;
    padding-left: 7px;
    border: 1px solid #777;
    background-color: #f0f0f0;
    color: #777;
}
.spin {
    display: flex;
    flex-direction: column;
    width: 17px;
    gap: 1px;
}
.spin button {
    height: 10px;
    display: flex;
    justify-content: center;
    align-items: center;
    border: 1px solid #c3c3c3;
}
.spin button::before {
    content: "";
    border: 3px solid transparent;
    border-top-width: 0;
    border-bottom-color: #666;
}
.spin button:last-child::before {
    border-top: 3px solid #666;
    border-bottom-width: 0;
}
.spin.dark button::before {
    border-bottom-color: #000;
    border-top-color: #000;
}
.repeat-select {
    position: relative;
    margin: 0 6px;
}
.playback label[for="repeat"] {
    width: 39px;
}
.repeat-select select {
    display: block;
    appearance: none;
    width: 39px;
    height: 20px;
    padding-left: 3px;
    border: 1px solid #c6c6c6;
    background: linear-gradient(90deg, #ececec 18px, #fff 18px);
    color: #777;
    opacity: 1;
}
.repeat-select svg {
    position: absolute;
    right: 4px;
    top: 8px;
}
.time-label {
    width: 35px;
}
.time {
    width: 74px;
}
.beat {
    width: 39px;
    height: 26px;
    border: solid;
    border-width: 1px 2px 2px 1px;
    border-color: #a3a191 #e4e2d2 #e4e2d2 #a3a191;
    background: linear-gradient(#d3d0bc, #dedac4 30%, #b5b29a 65%, #8e8c77);
}
.equals {
    width: 18px;
    padding-left: 5px;
}
.tempo input {
    width: 54px;
    height: 21px;
    margin-right: 1px;
    padding-left: 6px;
    border: 1px solid #555;
    background-color: #fff;
}
.speaker {
    margin-left: 5px;
}
.navigation {
    padding-right: 4px;
    border-width: 0 1px 0 1px;
}

/* Status bar */
.statusbar {
    display: flex;
    height: 20px;
    padding-left: 2px;
    border-top: 1px solid #fff;
    background-color: #f0f0f0;
    box-shadow: inset 0 1px #d5d5d5;
    line-height: 21px;
    white-space: nowrap;
}
.message {
    flex: 1;
}
.num {
    width: 36px;
    margin-top: 2px;
    padding-left: 4px;
    border: solid #d0d0d0;
    border-width: 0 1px;
    line-height: 18px;
}
.spacer {
    width: 27px;
    margin-top: 2px;
    border-right: 1px solid #d0d0d0;
}

/* Windows taskbar */
.taskbar {
    display: flex;
    height: 40px;
    background: linear-gradient(90deg, #10191c, #0d1417 30%, #101a1e 60%, #0f1518 68%, #080807 76%, #0c0b09 85%, #0a141a);
    color: #fff;
    font-family: "Open Sans", "Noto Sans", sans-serif;
}
.start {
    width: 48px;
    display: flex;
    justify-content: center;
    align-items: center;
}
.search {
    display: flex;
    align-items: center;
    width: 344px;
    padding: 0 13px 0 9px;
    background-color: #f2f2f2;
}
.search input {
    flex: 1;
    min-width: 0;
    padding-left: 9px;
    font-size: 14px;
    line-height: 20px;
}
.search input::placeholder {
    color: #444;
    opacity: 1;
}
.apps {
    display: flex;
    gap: 1px;
    padding-left: 2px;
}
.apps button {
    width: 48px;
    height: 40px;
    display: flex;
    justify-content: center;
    align-items: center;
}
.apps .running {
    background: linear-gradient(#76b9ed, #76b9ed) center bottom / 40px 2px no-repeat;
}
.apps .current {
    background-color: #3d4446;
    background-size: 48px 2px;
}
.tray {
    display: flex;
    align-items: center;
    gap: 9px;
    margin-left: auto;
}
.people {
    margin-right: 13px;
}
.clock {
    display: flex;
    flex-direction: column;
    align-items: center;
    width: 58px;
    line-height: 18px;
}
.notifications {
    position: relative;
    width: 33px;
    padding-left: 6px;
}
.badge {
    position: absolute;
    left: 13px;
    top: 5px;
    width: 17px;
    height: 17px;
    border: 1px solid #888;
    border-radius: 9px;
    background-color: #333;
    font-size: 11px;
    line-height: 15px;
}
.show-desktop {
    width: 5px;
    height: 40px;
    border-left: 1px solid #666;
}
```
